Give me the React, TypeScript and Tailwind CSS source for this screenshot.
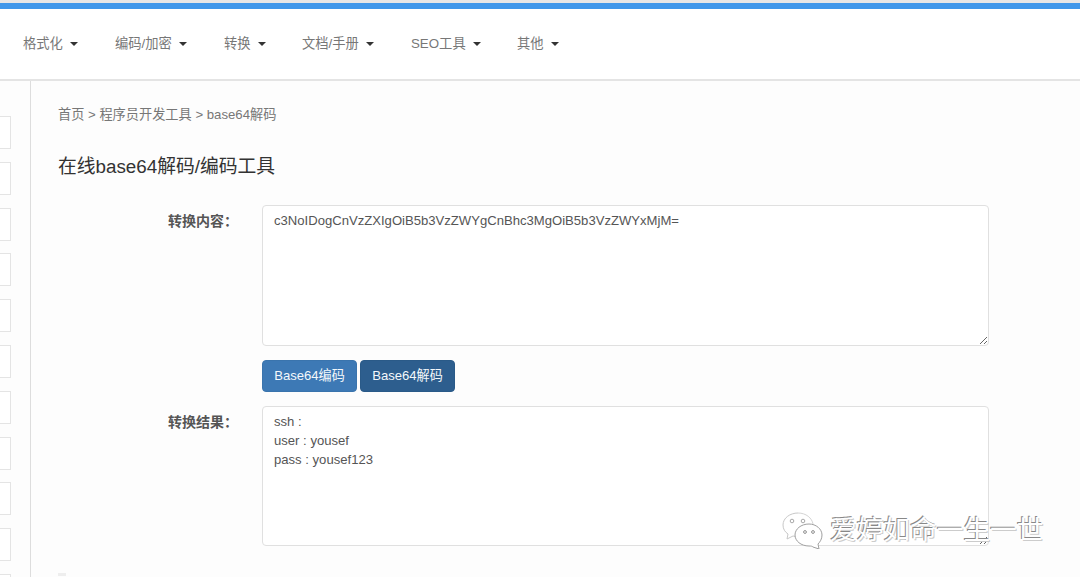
import React from "react";

const font = { fontFamily: '"Liberation Sans","Noto Sans CJK SC",sans-serif' };
const navItems = [
  { label: "格式化", cls: "w-[92px]" },
  { label: "编码/加密", cls: "w-[109px]" },
  { label: "转换", cls: "w-[78px]" },
  { label: "文档/手册", cls: "w-[109px]" },
  { label: "SEO工具", cls: "w-[106px]" },
  { label: "其他", cls: "w-[78px]" },
];
const boxes = Array.from({ length: 11 }, (_, i) => i);

function Wechat() {
  return (
    <svg width="42" height="38" viewBox="0 0 42 38" fill="none" className="shrink-0">
      <path d="M17 2C9 2 2 7 2 14c0 4 2 7 5 9l-1 5 6-3c1 0 3 1 5 1" fill="#fff" stroke="#c8c8c8" strokeWidth="1" />
      <path d="M17 2c8 0 14 5 15 11" stroke="#d4d4d4" strokeWidth="1" fill="#fff" />
      <circle cx="11" cy="10" r="1.8" stroke="#a8a8a8" fill="#fff" />
      <circle cx="22" cy="10" r="1.8" stroke="#a8a8a8" fill="#fff" />
      <path d="M28 13c-8 0-14 5-14 11s6 11 14 11c2 0 3 0 4 1l6 2-1-5c2-2 4-5 4-9 0-6-6-11-13-11z" fill="#fff" stroke="#a0a0a0" strokeWidth="1" />
      <circle cx="24" cy="21" r="1.4" stroke="#909090" fill="#fff" />
      <circle cx="32" cy="21" r="1.4" stroke="#909090" fill="#fff" />
    </svg>
  );
}

function Field({ label, value, h }: { label: string; value: string; h: string }) {
  return (
    <div className="flex">
      <label className="w-[180px] shrink-0 pt-[7px] text-right text-[14px] leading-[18px] font-bold text-[#555]">{label}</label>
      <textarea
        readOnly
        value={value}
        className={`ml-[24px] block w-[727px] resize-y rounded-[4px] border border-[#e0e0e0] bg-white px-[11px] py-[6px] text-[13.1px] leading-[18.8px] text-[#555] outline-none ${h}`}
        style={font}
      />
    </div>
  );
}

export default function App() {
  return (
    <div className="relative h-[577px] w-[1080px] overflow-hidden bg-[#fdfdfd]" style={font}>
      <div className="h-[3px] bg-[#e6e6e6]" />
      <div className="h-[6px] bg-[#3f97ea]" />
      <nav className="flex h-[72px] items-center border-b-2 border-[#e4e4e4] bg-white pl-[23px]">
        {navItems.map((n) => (
          <div key={n.label} className={`flex items-center text-[13.3px] text-[#777] ${n.cls}`}>
            <span>{n.label}</span>
            <span className="ml-[7px] h-0 w-0 border-x-[4px] border-t-[4px] border-x-transparent border-t-[#333]" />
          </div>
        ))}
      </nav>
      <div className="flex">
        <aside className="flex h-[496px] w-[31px] shrink-0 flex-col gap-[12.8px] border-r border-[#ddd] pt-[35px]">
          {boxes.map((b) => (
            <div key={b} className="h-[33px] w-[11px] shrink-0 border border-l-0 border-[#e4e4e4] bg-white" />
          ))}
        </aside>
        <main className="min-w-0 flex-1 pl-[27px]">
          <div className="pt-[25px] text-[13.2px] leading-[18px] text-[#777]">首页 &gt; 程序员开发工具 &gt; base64解码</div>
          <h1 className="mt-[31px] text-[18.8px] leading-[24px] font-normal text-[#333]">在线base64解码/编码工具</h1>
          <div className="mt-[26px]">
            <Field h="h-[141px]" label="转换内容：" value="c3NoIDogCnVzZXIgOiB5b3VzZWYgCnBhc3MgOiB5b3VzZWYxMjM=" />
            <div className="mt-[14px] ml-[204px] flex gap-[3px]">
              <button className="h-[32px] w-[95px] rounded-[4px] border border-[#3a74ad] bg-[#3d79b5] text-[13.1px] text-[#f4f8fb]">Base64编码</button>
              <button className="h-[32px] w-[95px] rounded-[4px] border border-[#2a5a88] bg-[#2d5e8e] text-[13.1px] text-[#f4f8fb]">Base64解码</button>
            </div>
            <div className="mt-[14px]">
              <Field h="h-[140px]" label="转换结果：" value={"ssh :\nuser : yousef\npass : yousef123"} />
            </div>
          </div>
          <div className="mt-[27px] h-[3px] w-[8px] bg-[#eee]" />
        </main>
      </div>
      <div className="absolute top-[510px] left-[781px] flex items-center gap-[7px]">
        <Wechat />
        <span className="text-[26.7px] leading-[40px] text-white [text-shadow:-1px_-1px_0_#888,1px_1px_0_#ccc]">爱婷如命一生一世</span>
      </div>
    </div>
  );
}
